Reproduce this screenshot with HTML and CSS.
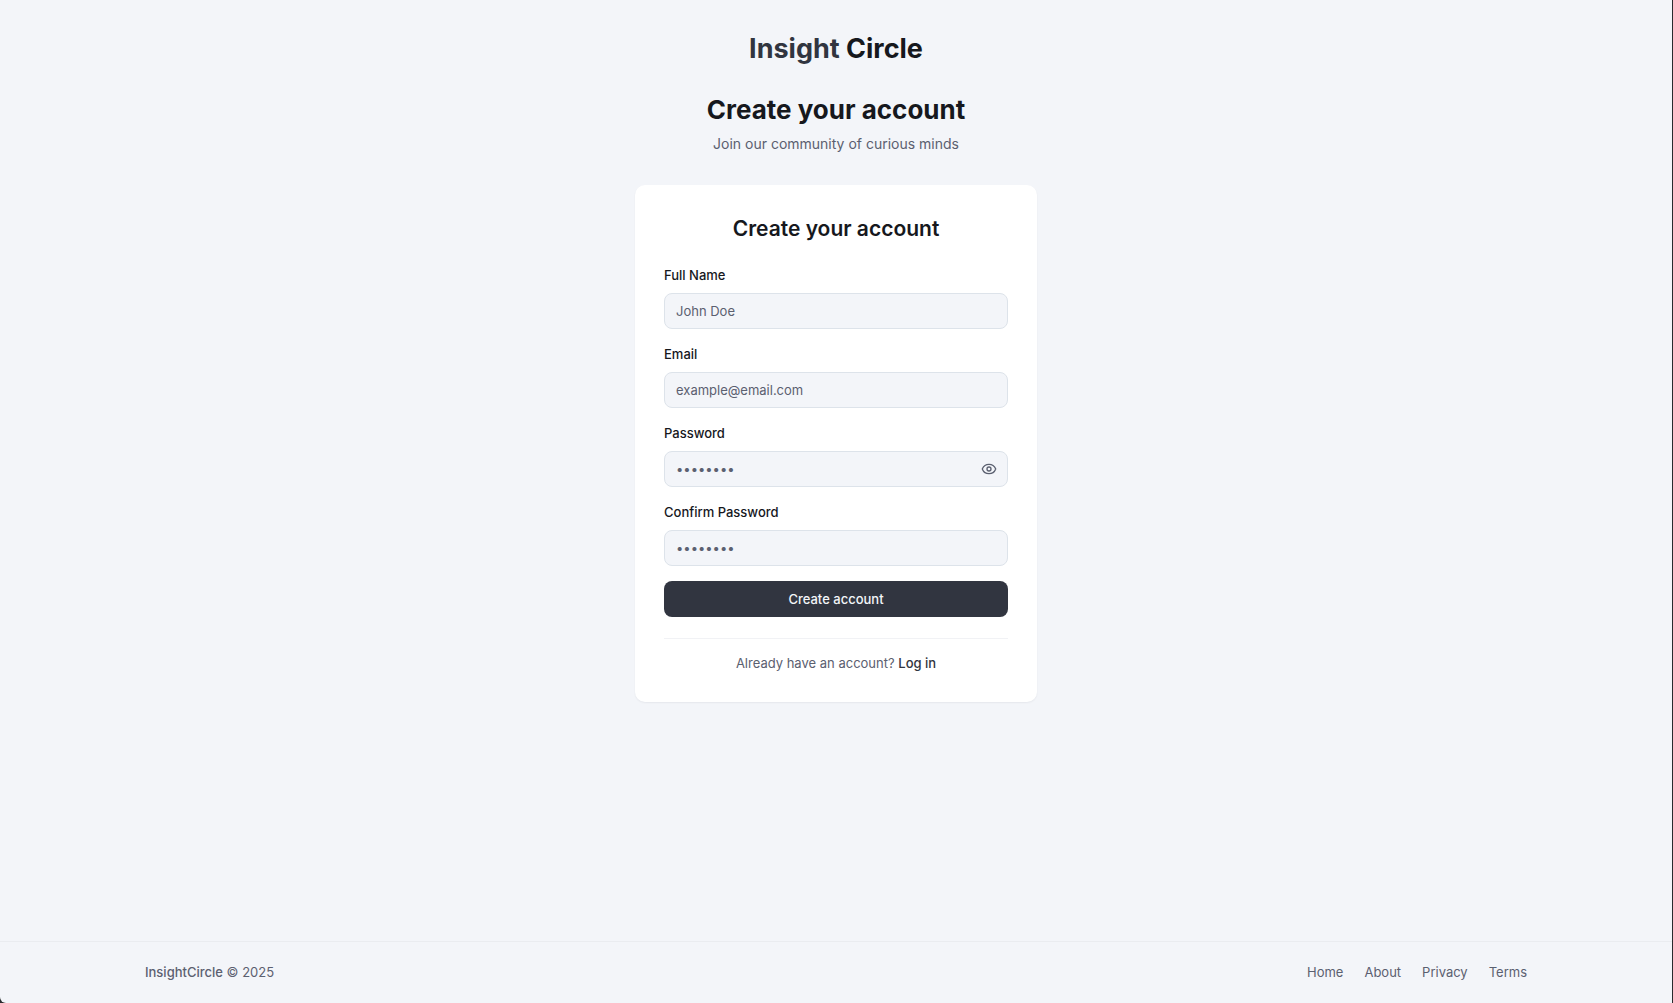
FILE: index.html
```html
<!DOCTYPE html>
<html lang="en">
<head>
  <meta charset="utf-8">
  <meta name="viewport" content="width=device-width, initial-scale=1">
  <title>Create your account - Insight Circle</title>
  <link rel="stylesheet" href="styles.css">
</head>
<body>
  <div class="page">
    <main class="main">
      <a class="brand" href="#"><span class="brand-accent">Insight</span> Circle</a>
      <header class="intro">
        <h1 class="intro-title">Create your account</h1>
        <p class="intro-text">Join our community of curious minds</p>
      </header>

      <section class="card">
        <h2 class="card-title">Create your account</h2>
        <form class="form">
          <div class="field">
            <label class="label" for="name">Full Name</label>
            <input class="input" id="name" type="text" placeholder="John Doe">
          </div>
          <div class="field">
            <label class="label" for="email">Email</label>
            <input class="input" id="email" type="email" placeholder="example@email.com">
          </div>
          <div class="field">
            <label class="label" for="password">Password</label>
            <div class="input-wrap">
              <input class="input" id="password" type="password" placeholder="••••••••">
              <button class="reveal" type="button" aria-label="Show password">
                <svg width="16" height="16" viewBox="0 0 24 24" fill="none" stroke="currentColor" stroke-width="2" stroke-linecap="round" stroke-linejoin="round" aria-hidden="true">
                  <path d="M2.06 12.35a1 1 0 0 1 0-.7 10.75 10.75 0 0 1 19.88 0 1 1 0 0 1 0 .7 10.75 10.75 0 0 1-19.88 0"/>
                  <circle cx="12" cy="12" r="3"/>
                </svg>
              </button>
            </div>
          </div>
          <div class="field">
            <label class="label" for="confirm">Confirm Password</label>
            <input class="input" id="confirm" type="password" placeholder="••••••••">
          </div>
          <button class="submit" type="submit">Create account</button>
        </form>
        <p class="login">Already have an account? <a class="login-link" href="#">Log in</a></p>
      </section>
    </main>

    <footer class="footer">
      <div class="footer-inner">
        <p class="copyright"><span class="copyright-name">InsightCircle</span> © 2025</p>
        <nav class="footer-nav">
          <a class="footer-link" href="#">Home</a>
          <a class="footer-link" href="#">About</a>
          <a class="footer-link" href="#">Privacy</a>
          <a class="footer-link" href="#">Terms</a>
        </nav>
      </div>
    </footer>
  </div>
</body>
</html>
```

FILE: styles.css
```css
*,
*::before,
*::after {
  box-sizing: border-box;
}

html {
  background: #2a2b2e;
}

body {
  margin: 0;
  font-family: Inter, "Liberation Sans", sans-serif;
  font-size: 13px;
  line-height: 20px;
  color: #16181d;
}

h1,
h2,
p {
  margin: 0;
}

a {
  color: inherit;
  text-decoration: none;
}

.page {
  display: flex;
  flex-direction: column;
  min-height: 100vh;
  margin-right: 1px;
  background: #f3f5f9;
  border-bottom-left-radius: 6px;
}

.main {
  flex: 1;
  display: flex;
  flex-direction: column;
  align-items: center;
  padding: 33px 16px;
}

.brand {
  font-size: 27px;
  font-weight: 700;
  line-height: 32px;
}

.brand-accent {
  color: #313540;
}

.intro {
  margin-top: 29px;
  text-align: center;
}

.intro-title {
  font-size: 26px;
  font-weight: 700;
  line-height: 32px;
}

.intro-text {
  margin-top: 7px;
  font-size: 14px;
  line-height: 22px;
  color: #5b6070;
}

.card {
  width: 100%;
  max-width: 402px;
  margin-top: 30px;
  padding: 29px;
  background: #fff;
  border-radius: 10px;
  box-shadow: 0 1px 2px rgba(22, 24, 29, 0.06);
}

.card-title {
  font-size: 21px;
  font-weight: 600;
  line-height: 29px;
  text-align: center;
}

.form {
  display: flex;
  flex-direction: column;
  gap: 15px;
  margin-top: 22px;
}

.field {
  display: flex;
  flex-direction: column;
  gap: 8px;
}

.label {
  font-weight: 500;
}

.input {
  width: 100%;
  height: 36px;
  padding: 0 11px;
  font: inherit;
  color: inherit;
  background: #f3f5f9;
  border: 1px solid #dde3ea;
  border-radius: 8px;
}

.input::placeholder {
  color: #5b6070;
  opacity: 1;
}

.input-wrap {
  position: relative;
}

.reveal {
  position: absolute;
  top: 0;
  right: 0;
  display: flex;
  align-items: center;
  height: 36px;
  padding: 0 11px;
  color: #5b6070;
  background: none;
  border: 0;
  cursor: pointer;
}

.submit {
  height: 36px;
  font: inherit;
  font-weight: 500;
  color: #f3f5f9;
  background: #313540;
  border: 0;
  border-radius: 8px;
  cursor: pointer;
}

.login {
  margin-top: 21px;
  padding-top: 14px;
  border-top: 1px solid #f1f2f5;
  text-align: center;
  color: #5b6070;
}

.login-link {
  font-weight: 500;
  color: #313540;
}

.footer {
  border-top: 1px solid #eaecf0;
}

.footer-inner {
  display: flex;
  justify-content: space-between;
  max-width: 1382px;
  margin: 0 auto;
  padding: 20px 0 21px;
  color: #5b6070;
}

.copyright-name {
  font-weight: 500;
}

.footer-nav {
  display: flex;
  gap: 21px;
}
```
